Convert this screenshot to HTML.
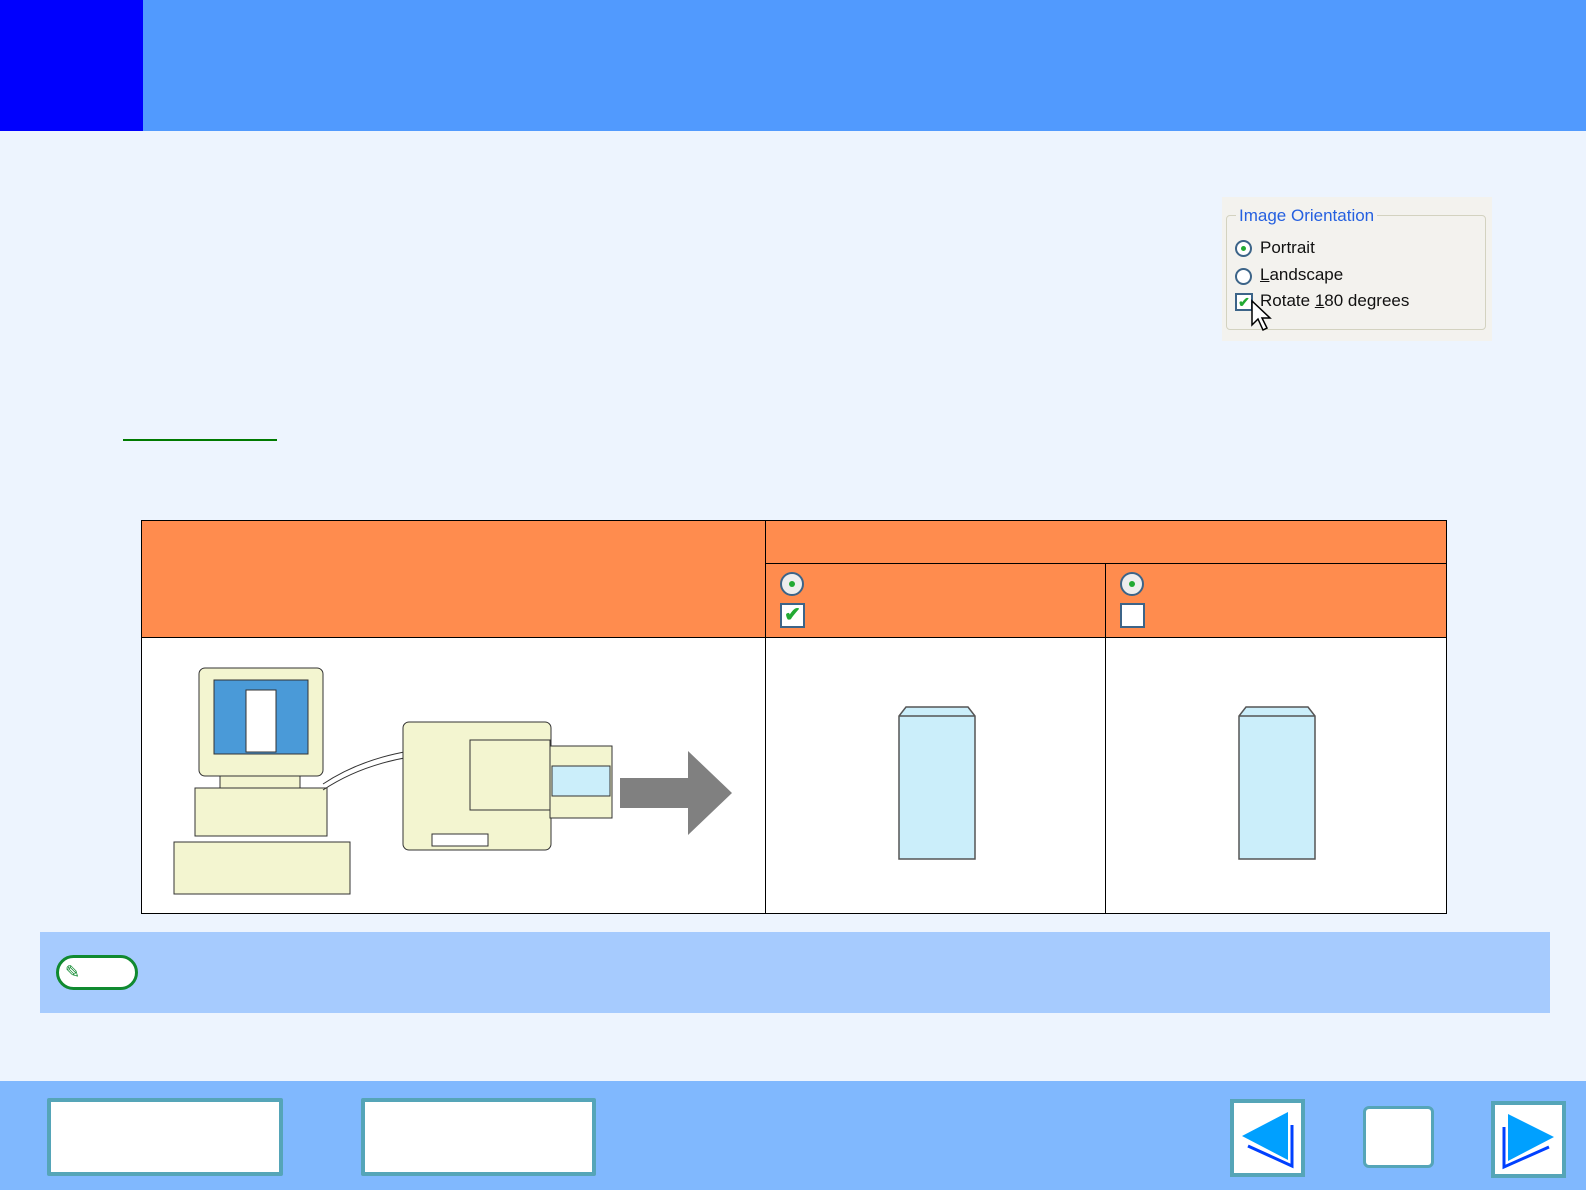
<!DOCTYPE html>
<html><head><meta charset="utf-8"><style>
body{margin:0;width:1586px;height:1190px;background:#edf4fe;position:relative;overflow:hidden;font-family:"Liberation Sans",sans-serif}
.a{position:absolute}
</style></head><body>
<div class="a" style="left:0;top:0;width:1586px;height:131px;background:#519afe"></div>
<div class="a" style="left:0;top:0;width:143px;height:131px;background:#0000fe"></div>

<div class="a" style="left:1222px;top:197px;width:270px;height:144px;background:#f3f2ee">
 <div class="a" style="left:4px;top:18px;width:258px;height:113px;border:1px solid #d3d2c0;border-radius:4px"></div>
 <div class="a" style="left:14px;top:9px;background:#f3f2ee;color:#2560e0;font-size:17px;padding:0 3px">Image Orientation</div>
 <div class="a" style="left:13px;top:43px;width:17px;height:17px;border:2px solid #3c6488;border-radius:50%;box-sizing:border-box;background:#fff"><div class="a" style="left:4px;top:4px;width:5px;height:5px;border-radius:50%;background:#22aa33"></div></div>
 <div class="a" style="left:38px;top:41px;font-size:17px;color:#111">Portrait</div>
 <div class="a" style="left:13px;top:71px;width:17px;height:17px;border:2px solid #3c6488;border-radius:50%;box-sizing:border-box;background:#fff"></div>
 <div class="a" style="left:38px;top:68px;font-size:17px;color:#111"><u>L</u>andscape</div>
 <div class="a" style="left:13px;top:96px;width:18px;height:18px;border:2px solid #3c6488;box-sizing:border-box;background:#fff;color:#22aa33;font-size:14px;line-height:14px;text-align:center;font-weight:bold">✔</div>
 <div class="a" style="left:38px;top:94px;font-size:17px;color:#111">Rotate <u>1</u>80 degrees</div>
 <svg class="a" style="left:28px;top:102px" width="22" height="36"><path d="M2 2 L2 26 L8 20 L13 31 L17 29 L12 19 L20 19 Z" fill="#fff" stroke="#000" stroke-width="1.5"/></svg>
</div>

<div class="a" style="left:123px;top:439px;width:154px;height:2px;background:#007a00"></div>

<div class="a" style="left:141px;top:520px;width:1306px;height:394px;border:1px solid #000;box-sizing:border-box;background:#fff">
 <div class="a" style="left:0;top:0;width:1304px;height:116px;background:#ff8c4e;border-bottom:1px solid #000"></div>
 <div class="a" style="left:623px;top:0;width:1px;height:392px;background:#000"></div>
 <div class="a" style="left:623px;top:42px;width:681px;height:1px;background:#000"></div>
 <div class="a" style="left:963px;top:42px;width:1px;height:350px;background:#000"></div>
 <div class="a" style="left:638px;top:51px;width:24px;height:24px;border:2px solid #3c6488;border-radius:50%;box-sizing:border-box;background:#eee"><div class="a" style="left:7px;top:7px;width:6px;height:6px;border-radius:50%;background:#22aa33"></div></div>
 <div class="a" style="left:638px;top:82px;width:25px;height:25px;border:2px solid #3c6488;box-sizing:border-box;background:#fff;color:#22aa33;font-size:20px;line-height:21px;text-align:center;font-weight:bold">✔</div>
 <div class="a" style="left:978px;top:51px;width:24px;height:24px;border:2px solid #3c6488;border-radius:50%;box-sizing:border-box;background:#eee"><div class="a" style="left:7px;top:7px;width:6px;height:6px;border-radius:50%;background:#22aa33"></div></div>
 <div class="a" style="left:978px;top:82px;width:25px;height:25px;border:2px solid #3c6488;box-sizing:border-box;background:#fff"></div>
 <svg class="a" style="left:756px;top:185px" width="80" height="154"><path d="M8 1 L70 1 L77 10 L77 153 L1 153 L1 10 Z M1 10 L77 10" fill="#cbeefa" stroke="#555" stroke-width="1.5"/></svg>
 <svg class="a" style="left:1096px;top:185px" width="80" height="154"><path d="M8 1 L70 1 L77 10 L77 153 L1 153 L1 10 Z M1 10 L77 10" fill="#cbeefa" stroke="#555" stroke-width="1.5"/></svg>
 <svg class="a" style="left:28px;top:145px" width="570" height="235">
  <g stroke="#333" stroke-width="1" fill="#f3f5d0">
   <rect x="29" y="2" width="124" height="108" rx="6"/>
   <rect x="44" y="14" width="94" height="74" fill="#4a9ad8"/>
   <rect x="76" y="24" width="30" height="62" fill="#fff"/>
   <rect x="50" y="110" width="80" height="12"/>
   <rect x="25" y="122" width="132" height="48"/>
   <rect x="4" y="176" width="176" height="52"/>
   <path d="M153 118 C180 100 210 90 240 85" fill="none"/>
   <path d="M153 124 C180 106 210 96 240 91" fill="none"/>
   <rect x="233" y="56" width="148" height="128" rx="6"/>
   <rect x="300" y="74" width="80" height="70"/>
   <rect x="380" y="80" width="62" height="72"/>
   <rect x="382" y="100" width="58" height="30" fill="#cbeefa"/>
   <rect x="262" y="168" width="56" height="12" fill="#fff"/>
  </g>
  <path d="M450 112 L518 112 L518 85 L562 127 L518 169 L518 142 L450 142 Z" fill="#808080"/>
 </svg>
</div>

<div class="a" style="left:40px;top:932px;width:1510px;height:81px;background:#a6cbfe"></div>
<div class="a" style="left:56px;top:955px;width:82px;height:35px;border:3px solid #108a30;border-radius:18px;box-sizing:border-box;background:#fff;color:#108a30;font-size:18px;line-height:28px;padding-left:6px">✎</div>

<div class="a" style="left:0;top:1081px;width:1586px;height:109px;background:#80b8fe"></div>
<div class="a" style="left:47px;top:1098px;width:236px;height:78px;border:4px solid #55a5b8;box-sizing:border-box;background:#fff;border-radius:2px"></div>
<div class="a" style="left:361px;top:1098px;width:235px;height:78px;border:4px solid #55a5b8;box-sizing:border-box;background:#fff;border-radius:2px"></div>
<div class="a" style="left:1230px;top:1099px;width:75px;height:78px;border:4px solid #55a5b8;box-sizing:border-box;background:#fff"><svg width="67" height="70"><path d="M8 33 L54 9 L54 57 Z" fill="#00a0ff"/><path d="M58 22 L58 63 L14 43" fill="none" stroke="#0040ff" stroke-width="3"/></svg></div>
<div class="a" style="left:1363px;top:1106px;width:71px;height:62px;border:3px solid #55a5b8;box-sizing:border-box;background:#fff;border-radius:6px"></div>
<div class="a" style="left:1491px;top:1101px;width:75px;height:77px;border:4px solid #55a5b8;box-sizing:border-box;background:#fff"><svg width="67" height="69"><path d="M13 9 L59 32 L13 56 Z" fill="#00a0ff"/><path d="M9 22 L9 62 L54 42" fill="none" stroke="#0040ff" stroke-width="3"/></svg></div>
</body></html>
